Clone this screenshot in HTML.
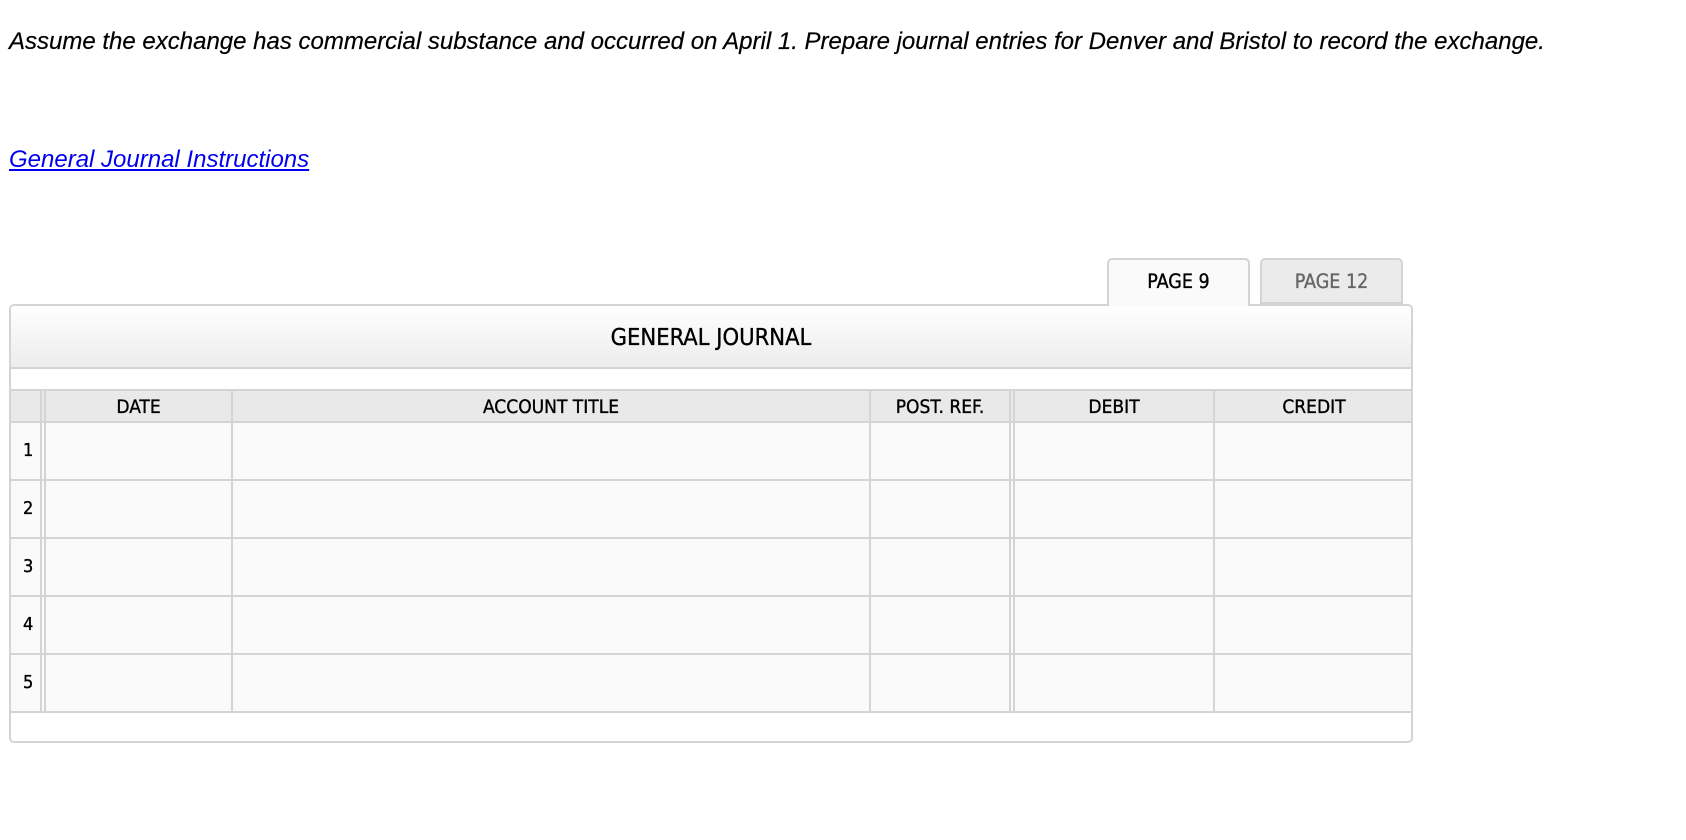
<!DOCTYPE html>
<html><head><meta charset="utf-8"><style>
*{margin:0;padding:0;box-sizing:border-box}
body{width:1686px;height:840px;background:#fff;position:relative;overflow:hidden;font-family:"Liberation Sans",Arial,sans-serif}
.q{position:absolute;left:9px;top:28px;font-size:24px;font-style:italic;color:#000;white-space:nowrap;-webkit-text-stroke:0.2px #000}
.l{position:absolute;left:9px;top:146px;font-size:24px;font-style:italic;color:#00e;text-decoration:underline;white-space:nowrap}
.c{font-family:"DejaVu Sans Condensed","Liberation Sans",sans-serif;-webkit-text-stroke:0.35px currentColor}
.tab{position:absolute;top:258px;height:47px;border:2px solid #d4d4d4;border-bottom:none;border-radius:5px 5px 0 0;font-size:19.5px;text-align:center;line-height:44px}
.tbl{position:absolute;left:9px;top:304px;width:1404px;height:439px;border:2px solid #d4d4d4;border-radius:5px;background:#fff;overflow:hidden}
.hd{position:absolute;left:0;top:0;right:0;height:63px;background:linear-gradient(#fff,#ececec);border-bottom:2px solid #d4d4d4;text-align:center;font-size:23.5px;line-height:63px;color:#000}
.ch{position:absolute;left:0;right:0;top:83px;height:34px;background:#e9e9e9;border-top:2px solid #d4d4d4;border-bottom:2px solid #d4d4d4}
.row{position:absolute;left:0;right:0;height:58px;background:#fafafa;border-bottom:2px solid #d4d4d4}
.v{position:absolute;top:83px;height:323px;width:2px;background:#d4d4d4}
.h{position:absolute;top:90px;font-size:19px;text-align:center;color:#000}
.n{position:absolute;left:12px;font-size:18px;color:#000}
</style></head><body>
<div class="q">Assume the exchange has commercial substance and occurred on April 1. Prepare journal entries for Denver and Bristol to record the exchange.</div>
<div class="l">General Journal Instructions</div>
<div class="tbl c">
<div class="hd">GENERAL JOURNAL</div>
<div class="ch"></div>
<div class="row" style="top:117px"></div>
<div class="row" style="top:175px"></div>
<div class="row" style="top:233px"></div>
<div class="row" style="top:291px"></div>
<div class="row" style="top:349px"></div>
<div class="v" style="left:29px"></div><div class="v" style="left:33px"></div>
<div class="v" style="left:220px"></div>
<div class="v" style="left:858px"></div>
<div class="v" style="left:998px"></div><div class="v" style="left:1002px"></div>
<div class="v" style="left:1202px"></div>
<div class="h" style="left:35px;width:185px">DATE</div>
<div class="h" style="left:222px;width:636px">ACCOUNT TITLE</div>
<div class="h" style="left:860px;width:138px">POST. REF.</div>
<div class="h" style="left:1004px;width:198px">DEBIT</div>
<div class="h" style="left:1204px;width:198px">CREDIT</div>
<div class="n" style="top:134px">1</div>
<div class="n" style="top:192px">2</div>
<div class="n" style="top:250px">3</div>
<div class="n" style="top:308px">4</div>
<div class="n" style="top:366px">5</div>
</div>
<div class="tab c" style="left:1107px;width:143px;background:#fafafa;color:#000;height:48px;z-index:2">PAGE 9</div>
<div class="tab c" style="left:1260px;width:143px;background:#ebebeb;color:#666;height:46px;border-bottom:2px solid #d4d4d4">PAGE 12</div>
</body></html>
